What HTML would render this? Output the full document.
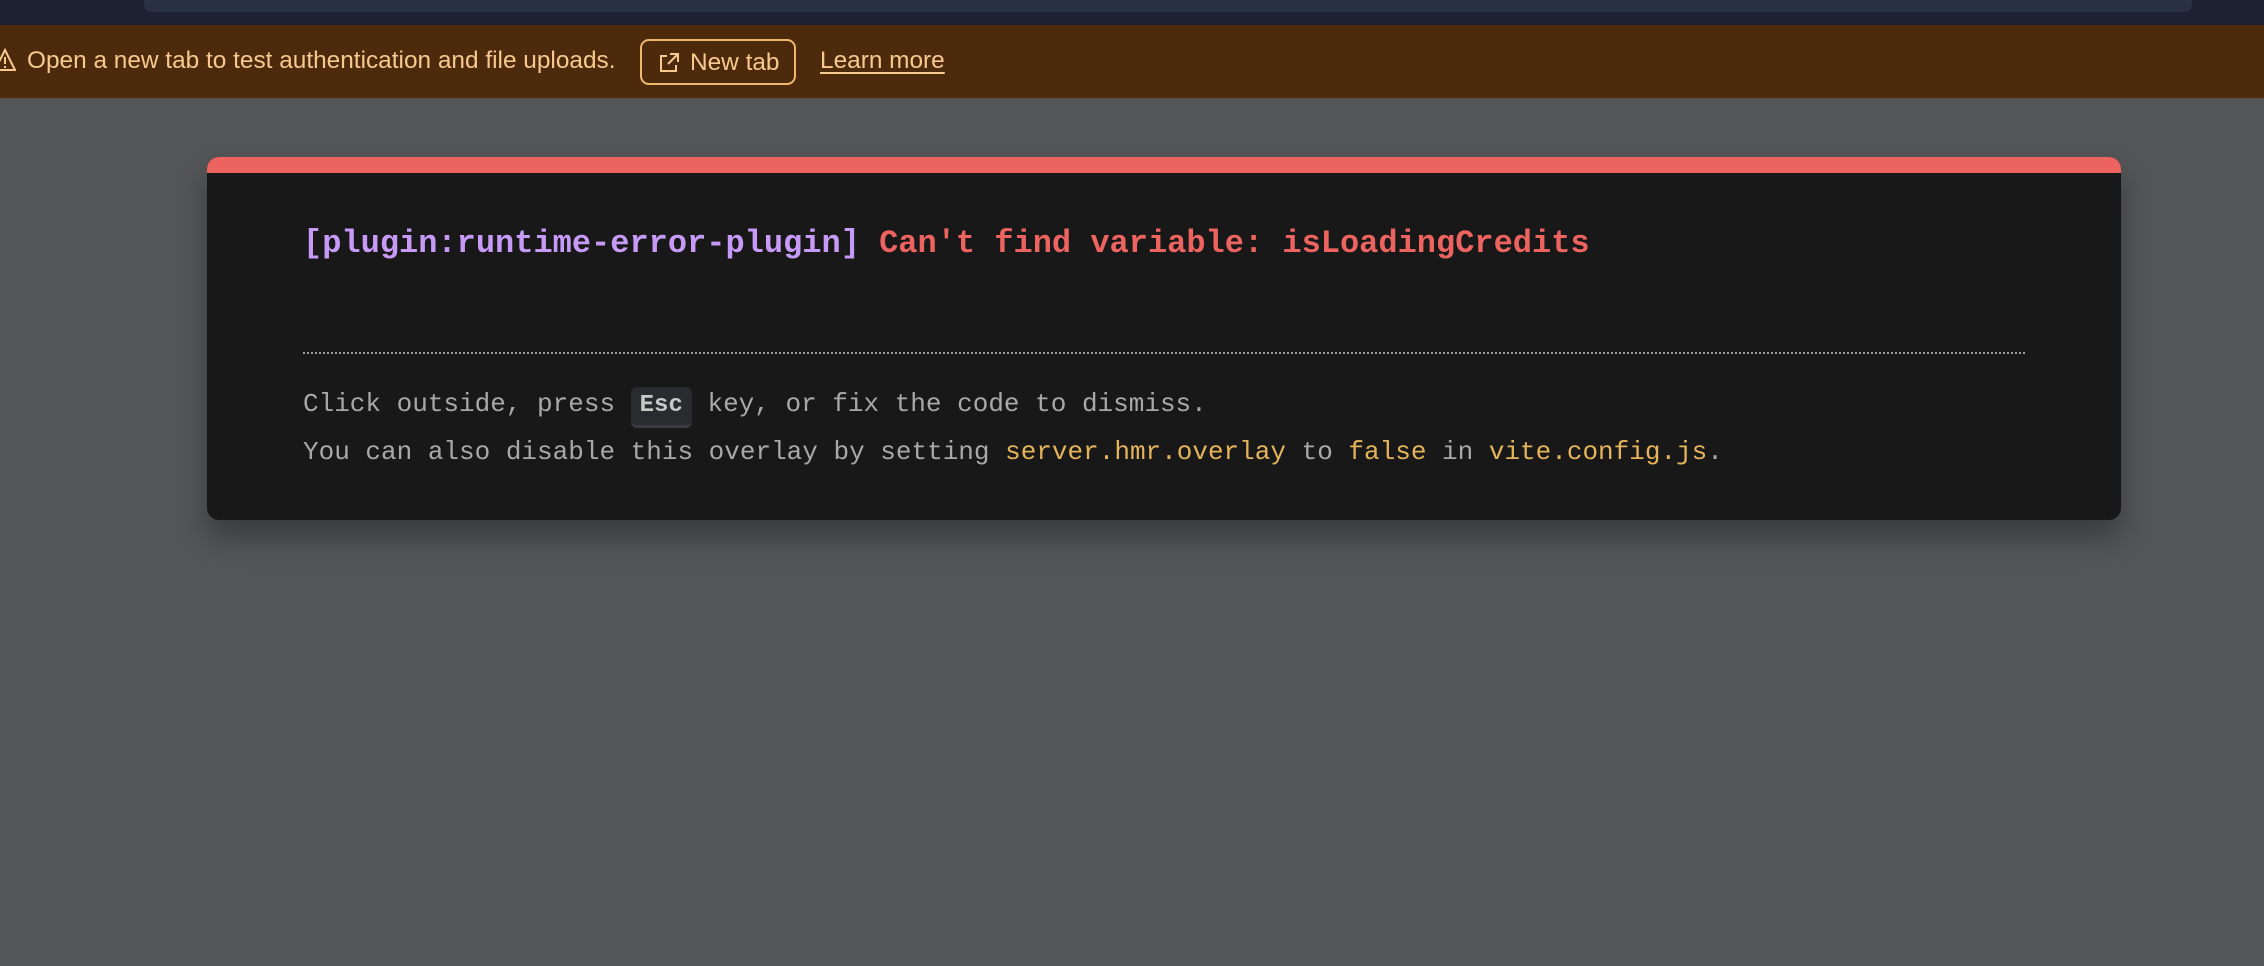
<!DOCTYPE html>
<html><head><meta charset="utf-8"><style>
html,body{margin:0;padding:0;width:2264px;height:966px;overflow:hidden;background:#545557;font-family:"Liberation Sans",sans-serif}
.top{position:absolute;left:0;top:0;width:2264px;height:25px;background:#1d2232}
.addr{position:absolute;left:144px;top:0;width:2048px;height:12px;background:#2b3144;border-radius:0 0 8px 8px}
.banner{position:absolute;left:0;top:25px;width:2264px;height:73px;background:#4d2a0c;color:#f7c98f;font-size:24.4px}
.banner .t{position:absolute;left:27px;top:22px;white-space:nowrap}
.btn{position:absolute;left:640px;top:14px;border:2px solid #f0b86e;border-radius:9px;box-sizing:border-box;width:156px;height:46px}
.btn span{position:absolute;left:48px;top:8px}
.lm{position:absolute;left:820px;top:22px;text-decoration:underline;text-underline-offset:4px}
.card{position:absolute;left:207px;top:157px;width:1914px;height:363px;background:#181818;border-radius:12px;overflow:hidden;box-shadow:0 18px 30px rgba(0,0,0,.3);font-family:"Liberation Mono",monospace}
.red{position:absolute;left:0;top:0;width:100%;height:16px;background:#ed635f}
.title{position:absolute;left:96px;top:65px;font-size:32px;font-weight:bold;white-space:nowrap;line-height:44px}
.hr{position:absolute;left:96px;top:195px;width:1722px;border-top:2px dotted #9a9a9a}
.l{position:absolute;left:96px;font-size:26px;color:#a8a8a8;white-space:nowrap}
.y{color:#e5b35a}
kbd{display:inline-block;background:#2a2b2f;border-radius:6px;border-bottom:3px solid #3a3b40;color:#c8c8c8;font-weight:bold;font-family:"Liberation Mono",monospace;padding:4px 9px;line-height:30px;font-size:24px}
</style></head><body>
<div class="top"><div class="addr"></div></div>
<div class="banner">
<svg style="position:absolute;left:-6px;top:22px" width="22" height="26" viewBox="0 0 22 26"><path d="M11 3 L21 23 H1 Z" fill="none" stroke="#f7c98f" stroke-width="2"/><path d="M11 10v7M11 19v2" stroke="#f7c98f" stroke-width="2"/></svg>
<div class="t">Open a new tab to test authentication and file uploads.</div>
<div class="btn"><svg style="position:absolute;left:16px;top:11px" width="22" height="22" viewBox="0 0 22 22"><path d="M9 4H3v15h15v-6M12 2h8v8M20 2L10 12" fill="none" stroke="#f7c98f" stroke-width="2"/></svg><span>New tab</span></div>
<div class="lm">Learn more</div>
</div>
<div class="card">
<div class="red"></div>
<div class="title"><span style="color:#c89af7">[plugin:runtime-error-plugin]</span> <span style="color:#ed635f">Can't find variable: isLoadingCredits</span></div>
<div class="hr"></div>
<div class="l" style="top:230px">Click outside, press <kbd>Esc</kbd> key, or fix the code to dismiss.</div>
<div class="l" style="top:280px">You can also disable this overlay by setting <span class="y">server.hmr.overlay</span> to <span class="y">false</span> in <span class="y">vite.config.js</span>.</div>
</div>
</body></html>
